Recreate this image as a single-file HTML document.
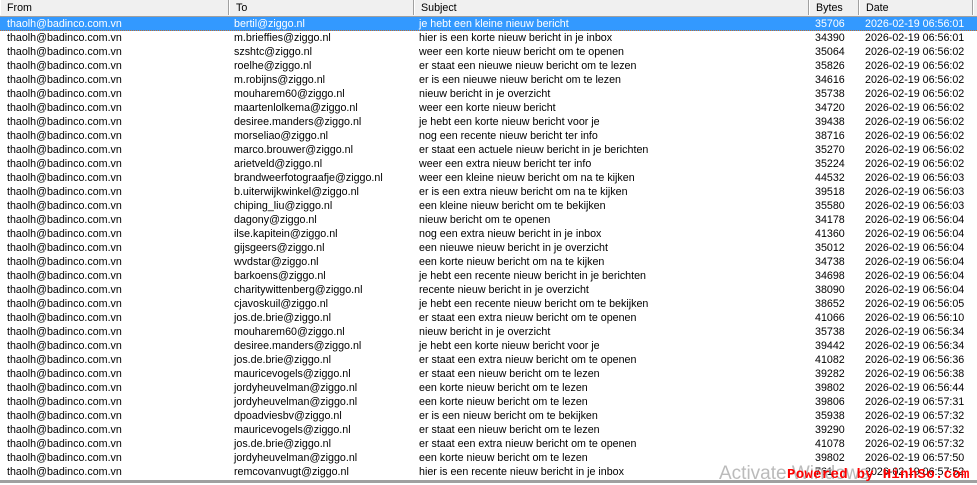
<!DOCTYPE html><html><head><style>
body{margin:0;width:977px;height:483px;overflow:hidden;background:#fff;font-family:"Liberation Sans",sans-serif;font-size:10.7px;position:relative}
.hd{position:absolute;top:0;left:0;width:977px;height:16px;background:#f0f0f0;border-bottom:1px solid #a0a0a0}
.hd div{position:absolute;top:0;height:15px;line-height:16px;padding-left:6px;border-right:1px solid #a0a0a0;border-left:1px solid #fff;box-sizing:border-box;color:#000}
.r{position:absolute;left:0;width:977px;height:14px;line-height:14px;white-space:nowrap}
.r span{position:absolute;top:0}
.sel{background:#3399ff;color:#fff;border-bottom:1px dotted #c07030;box-sizing:border-box}
</style></head><body>
<div class="hd">
<div style="left:0;width:229px">From</div>
<div style="left:229px;width:185px">To</div>
<div style="left:414px;width:395px">Subject</div>
<div style="left:809px;width:50px">Bytes</div>
<div style="left:859px;width:114px">Date</div>
<div style="left:973px;width:6px"></div>
</div>
<div id="rows"></div>
<div style="position:absolute;left:0;top:480px;width:977px;height:3px;background:#a0a0a0"></div>
<div style="position:absolute;left:719px;top:463px;font-size:19px;color:#bbb;white-space:nowrap">Activate Windows</div>
<div style="position:absolute;left:787px;top:467px;font-size:14px;font-weight:bold;color:#f00;font-family:'Liberation Mono',monospace;letter-spacing:0.3px;white-space:nowrap">Powered by HinhSo.com</div>
<script>
var d=[["bertil@ziggo.nl","je hebt een kleine nieuw bericht","35706","06:56:01"],
["m.brieffies@ziggo.nl","hier is een korte nieuw bericht in je inbox","34390","06:56:01"],
["szshtc@ziggo.nl","weer een korte nieuw bericht om te openen","35064","06:56:02"],
["roelhe@ziggo.nl","er staat een nieuwe nieuw bericht om te lezen","35826","06:56:02"],
["m.robijns@ziggo.nl","er is een nieuwe nieuw bericht om te lezen","34616","06:56:02"],
["mouharem60@ziggo.nl","nieuw bericht in je overzicht","35738","06:56:02"],
["maartenlolkema@ziggo.nl","weer een korte nieuw bericht","34720","06:56:02"],
["desiree.manders@ziggo.nl","je hebt een korte nieuw bericht voor je","39438","06:56:02"],
["morseliao@ziggo.nl","nog een recente nieuw bericht ter info","38716","06:56:02"],
["marco.brouwer@ziggo.nl","er staat een actuele nieuw bericht in je berichten","35270","06:56:02"],
["arietveld@ziggo.nl","weer een extra nieuw bericht ter info","35224","06:56:02"],
["brandweerfotograafje@ziggo.nl","weer een kleine nieuw bericht om na te kijken","44532","06:56:03"],
["b.uiterwijkwinkel@ziggo.nl","er is een extra nieuw bericht om na te kijken","39518","06:56:03"],
["chiping_liu@ziggo.nl","een kleine nieuw bericht om te bekijken","35580","06:56:03"],
["dagony@ziggo.nl","nieuw bericht om te openen","34178","06:56:04"],
["ilse.kapitein@ziggo.nl","nog een extra nieuw bericht in je inbox","41360","06:56:04"],
["gijsgeers@ziggo.nl","een nieuwe nieuw bericht in je overzicht","35012","06:56:04"],
["wvdstar@ziggo.nl","een korte nieuw bericht om na te kijken","34738","06:56:04"],
["barkoens@ziggo.nl","je hebt een recente nieuw bericht in je berichten","34698","06:56:04"],
["charitywittenberg@ziggo.nl","recente nieuw bericht in je overzicht","38090","06:56:04"],
["cjavoskuil@ziggo.nl","je hebt een recente nieuw bericht om te bekijken","38652","06:56:05"],
["jos.de.brie@ziggo.nl","er staat een extra nieuw bericht om te openen","41066","06:56:10"],
["mouharem60@ziggo.nl","nieuw bericht in je overzicht","35738","06:56:34"],
["desiree.manders@ziggo.nl","je hebt een korte nieuw bericht voor je","39442","06:56:34"],
["jos.de.brie@ziggo.nl","er staat een extra nieuw bericht om te openen","41082","06:56:36"],
["mauricevogels@ziggo.nl","er staat een nieuw bericht om te lezen","39282","06:56:38"],
["jordyheuvelman@ziggo.nl","een korte nieuw bericht om te lezen","39802","06:56:44"],
["jordyheuvelman@ziggo.nl","een korte nieuw bericht om te lezen","39806","06:57:31"],
["dpoadviesbv@ziggo.nl","er is een nieuw bericht om te bekijken","35938","06:57:32"],
["mauricevogels@ziggo.nl","er staat een nieuw bericht om te lezen","39290","06:57:32"],
["jos.de.brie@ziggo.nl","er staat een extra nieuw bericht om te openen","41078","06:57:32"],
["jordyheuvelman@ziggo.nl","een korte nieuw bericht om te lezen","39802","06:57:50"],
["remcovanvugt@ziggo.nl","hier is een recente nieuw bericht in je inbox","761","06:57:52"]];
var h="";d.forEach(function(r,i){h+='<div class="r'+(i==0?' sel':'')+'" style="top:'+(17+i*14)+'px"><span style="left:7px">thaolh@badinco.com.vn</span><span style="left:234px">'+r[0]+'</span><span style="left:419px">'+r[1]+'</span><span style="left:815px">'+r[2]+'</span><span style="left:865px">2026-02-19 '+r[3]+'</span></div>';});
document.getElementById("rows").innerHTML=h;
</script>
</body></html>
